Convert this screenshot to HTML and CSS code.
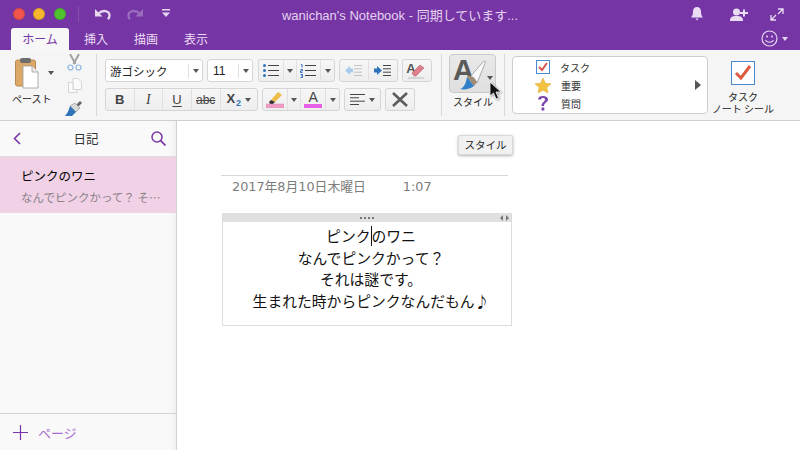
FILE: index.html
```html
<!DOCTYPE html>
<html lang="ja">
<head>
<meta charset="utf-8">
<title>OneNote</title>
<link rel="stylesheet" href="styles.css">
</head>
<body>
<div class="app">
  <header class="titlebar">
    <div class="toprow">
      <div class="top-left">
        <span class="light red"></span><span class="light yellow"></span><span class="light green"></span>
        <span class="top-sep"></span>
        <svg class="undo" width="16" height="12" viewBox="0 0 16 12"><path d="M0 1v7.500h7.500z" fill="#e6d7f0"/><path d="M3.500 5.500C7.500 1.500 14.500 2.500 14.500 7.500c0 1.500-.5 2.500-1.500 3.700" fill="none" stroke="#e6d7f0" stroke-width="2.300"/></svg>
        <svg class="redo" width="16" height="12" viewBox="0 0 16 12"><path d="M16 1v7.500H8.500z" fill="#9a6cbd"/><path d="M12.500 5.500C8.500 1.500 1.500 2.500 1.500 7.500c0 1.500.5 2.500 1.500 3.700" fill="none" stroke="#9a6cbd" stroke-width="2.300"/></svg>
        <svg class="qat" width="10" height="10" viewBox="0 0 10 10"><path d="M1 0h8v1.500H1zM1 3.500h8L5 8z" fill="#e6d7f0"/></svg>
      </div>
      <div class="doc-title">wanichan's Notebook - 同期しています...</div>
      <div class="top-right">
        <svg width="12" height="14" viewBox="0 0 12 14"><path d="M6 0c2.500 0 4 2 4 4.500 0 3 .5 4.500 2 6H0c1.500-1.500 2-3 2-6C2 2 3.500 0 6 0zM4.500 11.500h3L6 13.500z" fill="#eadcf3"/></svg>
        <svg class="add-user" width="18" height="13" viewBox="0 0 18 13"><circle cx="6.500" cy="4" r="3.500" fill="#eadcf3"/><path d="M0 13c0-4 2-5 6.500-5s6.500 1 6.500 5z" fill="#eadcf3"/><path d="M13 1.500h2v2.500h3v2h-3v2.500h-2V6h-3V4h3z" fill="#eadcf3"/></svg>
        <svg class="expand" width="14" height="13" viewBox="0 0 14 13"><path d="M8 1h5v5M13 1L8 6M6 12H1V7M1 12l5-5" fill="none" stroke="#eadcf3" stroke-width="1.300"/></svg>
      </div>
    </div>
    <nav class="tabrow">
      <span class="tab active">ホーム</span>
      <span class="tab">挿入</span>
      <span class="tab">描画</span>
      <span class="tab">表示</span>
      <span class="smile">
        <svg width="17" height="17" viewBox="0 0 17 17"><circle cx="8.500" cy="8.500" r="7.500" fill="none" stroke="#e6d7f0" stroke-width="1.200"/><circle cx="6" cy="6.500" r="1" fill="#e6d7f0"/><circle cx="11" cy="6.500" r="1" fill="#e6d7f0"/><path d="M4.500 10c1.500 3 6.500 3 8 0" fill="none" stroke="#e6d7f0" stroke-width="1.100"/></svg>
        <i class="caret light-caret"></i>
      </span>
    </nav>
  </header>

  <section class="ribbon">
    <div class="paste-group">
      <div class="paste">
        <div class="paste-top">
          <svg width="24" height="32" viewBox="0 0 24 32"><rect x=".5" y="3" width="20" height="26" rx="2" fill="#dca868" stroke="#b98a4e"/><rect x="5" y="1" width="11" height="5" rx="2" fill="#6d6d6d"/><path d="M8 9h9l6 6v16H8z" fill="#fff" stroke="#9d9d9d" stroke-width=".8"/><path d="M17 9v6h6" fill="#eee" stroke="#9d9d9d" stroke-width=".8"/></svg>
          <i class="caret paste-caret"></i>
        </div>
        <span class="rlabel paste-label">ペースト</span>
      </div>
      <div class="clip-tools">
        <svg width="15" height="17" viewBox="0 0 15 17"><path d="M3 0l5.500 10M12 0L6.500 10" stroke="#a3a3a3" stroke-width="2" fill="none"/><circle cx="3.500" cy="13.500" r="2.500" fill="none" stroke="#8db7e2" stroke-width="1.200"/><circle cx="11.500" cy="13.500" r="2.500" fill="none" stroke="#8db7e2" stroke-width="1.200"/></svg>
        <svg width="14" height="15" viewBox="0 0 14 15"><path d="M5 .5h5l3.500 3.500v7.500H5z" fill="#fafafa" stroke="#d4d4d4"/><path d="M.5 4.500H5v7h4v3H.5z" fill="#fafafa" stroke="#d4d4d4"/></svg>
        <svg width="17" height="16" viewBox="0 0 17 16"><path d="M11 5l4-4 2 2-4 4z" fill="#666"/><path d="M5 6l5-3 5 5-4 4z" fill="#d9d9d9" stroke="#8a8a8a" stroke-width=".6"/><path d="M5 6l6 6-4 4H0c3-3 4-7 5-10z" fill="#2f74bb"/></svg>
      </div>
    </div>

    <div class="font-group">
      <div class="frow">
        <div class="btn select font-name"><span>游ゴシック</span><i class="cell-caret"><i class="caret"></i></i></div>
        <div class="btn select font-size"><span>11</span><i class="cell-caret"><i class="caret"></i></i></div>
        <div class="btn list-btns">
          <span class="cell c-list">
            <svg width="16" height="13" viewBox="0 0 16 13"><circle cx="1.500" cy="1.500" r="1.500" fill="#2f74bb"/><circle cx="1.500" cy="6.500" r="1.500" fill="#2f74bb"/><circle cx="1.500" cy="11.500" r="1.500" fill="#2f74bb"/><path d="M5 1.500h11M5 6.500h11M5 11.500h11" stroke="#444"/></svg>
          </span><span class="cell c-caret"><i class="caret"></i></span>
          <span class="cell c-list">
            <svg width="16" height="14" viewBox="0 0 16 14"><path d="M1 .5h1v3M.5 5.500h2v1.500h-2v1.500h2M.5 10.500h2v1.300h-1 1v1.700h-2" fill="none" stroke="#2f74bb"/><path d="M5 1.500h11M5 6.500h11M5 11.500h11" stroke="#444"/></svg>
          </span><span class="cell c-caret"><i class="caret"></i></span>
        </div>
        <div class="btn indent-btns">
          <span class="cell c-indent">
            <svg width="17" height="11" viewBox="0 0 17 11"><path d="M0 5.500L5 1v2.500h3v4H5V10z" fill="#a9cbea"/><path d="M9 .5h8M9 3.800h8M9 7.200h8M9 10.500h8" stroke="#c2c2c2"/></svg>
          </span>
          <span class="cell c-indent">
            <svg width="17" height="11" viewBox="0 0 17 11"><path d="M8 5.500L3 1v2.500H0v4h3V10z" fill="#2f74bb"/><path d="M9 .5h8M9 3.800h8M9 7.200h8M9 10.500h8" stroke="#444"/></svg>
          </span>
        </div>
        <div class="btn single eraser">
          <span class="era-a">A</span>
          <svg class="era-rub" width="20" height="17" viewBox="0 0 20 17"><path d="M7 11l8-8 4 3-8 8H9z" fill="#dd7f8d" stroke="#b5616e" stroke-width=".6"/><path d="M3 16h16" stroke="#bbb"/></svg>
        </div>
      </div>
      <div class="frow">
        <div class="btn format-btns">
          <span class="cell fmt bold">B</span>
          <span class="cell fmt italic">I</span>
          <span class="cell fmt under">U</span>
          <span class="cell fmt strike">abc</span>
          <span class="cell fmt sub"><b class="sub-x">X</b><b class="sub-2">2</b><i class="caret sub-caret"></i></span>
        </div>
        <div class="btn color-btns">
          <span class="cell swatch-cell">
            <svg width="18" height="17" viewBox="0 0 18 17"><path d="M5 9l7-8 4 3-7 7z" fill="#f0bd4a"/><path d="M3 11l2-2 4 2-2 2H4z" fill="#333"/><rect y="13" width="18" height="4" fill="#f09cc5" stroke="#d888ad" stroke-width=".5"/></svg>
          </span><span class="cell c-caret"><i class="caret"></i></span>
          <span class="cell swatch-cell font-color">
            <span class="fc-a">A</span><i class="fc-bar"></i>
          </span><span class="cell c-caret"><i class="caret"></i></span>
        </div>
        <div class="btn single align">
          <svg width="15" height="11" viewBox="0 0 15 11"><path d="M0 .5h15M0 3.800h9M0 7.200h15M0 10.500h9" stroke="#444"/></svg>
          <i class="caret"></i>
        </div>
        <div class="btn single clear">
          <svg width="16" height="15" viewBox="0 0 16 15"><path d="M1 1l14 13M15 1L1 14" stroke="#5c5c5c" stroke-width="2.600"/></svg>
        </div>
      </div>
    </div>

    <div class="style-group">
      <div class="style-btn">
        <span class="style-a">A</span>
        <svg class="style-brush" width="26" height="32" viewBox="0 0 26 32"><path d="M10 18L23 3q2-2 2.500 0L17 24z" fill="#fafafa" stroke="#8a8a8a" stroke-width=".7"/><path d="M7 18q5-4 10 5l-3 4z" fill="#a08b74"/><path d="M0 30c4-1 6-6 7-12l7 9c-4 3-9 4-14 3z" fill="#2f7fc9"/></svg>
        <i class="caret style-caret"></i>
      </div>
      <span class="rlabel">スタイル</span>
    </div>

    <div class="gallery">
      <ul class="tag-list">
        <li>
          <svg width="14" height="14" viewBox="0 0 14 14"><rect x=".5" y=".5" width="13" height="13" fill="#fff" stroke="#4a8bd0"/><path d="M3 7l3 3 5-7" fill="none" stroke="#d9534a" stroke-width="2"/></svg>
          <span>タスク</span>
        </li>
        <li>
          <svg width="16" height="15" viewBox="0 0 16 15"><path d="M8 0l2.400 5.200 5.600.6-4.200 3.700 1.200 5.500L8 12.200 3 15l1.200-5.500L0 5.800l5.600-.6z" fill="#f3c23f" stroke="#d9a52c" stroke-width=".5"/></svg>
          <span>重要</span>
        </li>
        <li>
          <svg width="12" height="16" viewBox="0 0 12 16"><path d="M1 4.500C1 2 3 1 6 1s5 1.500 5 3.500c0 3-4 3-4 6.500H4.500c0-4 3.500-4 3.500-6.500 0-1-1-1.500-2-1.500s-2 .5-2.200 1.500z" fill="#7c45ad"/><rect x="4.500" y="12.500" width="2.800" height="3" fill="#7c45ad"/></svg>
          <span>質問</span>
        </li>
      </ul>
      <i class="gallery-arrow"></i>
    </div>

    <div class="task-group">
      <svg width="24" height="24" viewBox="0 0 24 24"><rect x=".5" y=".5" width="23" height="23" fill="#fff" stroke="#4a8bd0"/><path d="M5 12l5 5 9-12" fill="none" stroke="#dc5a3e" stroke-width="3"/></svg>
      <span class="rlabel task-label">タスク<br>ノート シール</span>
    </div>
  </section>

  <main class="workspace">
    <aside class="sidebar">
      <div class="side-head">
        <svg width="8" height="13" viewBox="0 0 8 13"><path d="M7 1L1.500 6.500 7 12" fill="none" stroke="#7a35a8" stroke-width="1.600"/></svg>
        <span>日記</span>
        <svg width="15" height="15" viewBox="0 0 15 15"><circle cx="6" cy="6" r="5" fill="none" stroke="#7a35a8" stroke-width="1.500"/><path d="M9.700 9.700L14.500 14.500" stroke="#7a35a8" stroke-width="1.700"/></svg>
      </div>
      <div class="page-item">
        <div class="page-title">ピンクのワニ</div>
        <div class="page-sub">なんでピンクかって？ そ…</div>
      </div>
      <div class="side-foot">
        <svg width="15" height="15" viewBox="0 0 15 15"><path d="M7.500 0v15M0 7.500h15" stroke="#7a35a8" stroke-width="1.200"/></svg>
        <span>ページ</span>
      </div>
    </aside>
    <div class="page">
      <div class="page-meta">
        <span class="meta-date">2017年8月10日木曜日</span>
        <span class="meta-time">1:07</span>
      </div>
      <div class="note">
        <div class="note-handle">
          <span class="dots"></span>
          <span class="arrows"><i class="ar-left"></i><i class="ar-right"></i></span>
        </div>
        <div class="note-body">
          <p>ピンク<span class="caret-bar"></span>のワニ</p>
          <p>なんでピンクかって？</p>
          <p>それは謎です。</p>
          <p>生まれた時からピンクなんだもん♪</p>
        </div>
      </div>
    </div>
  </main>

  <div class="tooltip">スタイル</div>
  <svg class="cursor" width="13" height="20" viewBox="0 0 13 20"><path d="M1 1v14l3.500-3 2.500 6 2.500-1-2.500-6H12z" fill="#111" stroke="#fff" stroke-width=".8"/></svg>
</div>
</body>
</html>
```
FILE: styles.css
```css
* { box-sizing: border-box; }
html, body { margin: 0; padding: 0; }
body {
  width: 800px;
  height: 450px;
  overflow: hidden;
  font-family: "Noto Sans CJK JP", "Liberation Sans", sans-serif;
  background: #fff;
}
i { display: block; font-style: normal; }
svg { display: block; flex: none; }

.app {
  position: relative;
  width: 800px;
  height: 450px;
  display: flex;
  flex-direction: column;
}

/* title bar */
.titlebar { height: 50px; background: #7635a5; flex: none; }
.toprow {
  height: 28px;
  display: grid;
  grid-template-columns: 1fr auto 1fr;
  align-items: center;
}
.top-left { display: flex; align-items: center; padding-left: 13px; }
.light { width: 12px; height: 12px; border-radius: 50%; margin-right: 8px; border: 1px solid rgba(0,0,0,.12); }
.light.red { background: #f2544e; }
.light.yellow { background: #f6b62d; }
.light.green { background: #4fc42e; margin-left: 1px; }
.top-sep { width: 1px; height: 16px; background: #8550ad; margin-left: 4px; }
.undo { margin-left: 16px; }
.redo { margin-left: 16px; }
.qat { margin-left: 18px; }
.doc-title {
  font-family: "Liberation Sans", "Noto Sans CJK JP", sans-serif;
  font-size: 13px;
  color: #e4d3ef;
  white-space: nowrap;
}
.top-right { display: flex; align-items: center; justify-content: flex-end; padding-right: 16px; }
.add-user { margin-left: 27px; }
.expand { margin-left: 22px; }

.tabrow { height: 22px; display: flex; align-items: stretch; padding-left: 11px; padding-right: 12px; }
.tab {
  font-size: 12px;
  line-height: 22px;
  color: #eadcf3;
  padding: 0 13px;
}
.tab.active {
  width: 58px;
  padding: 0;
  margin-right: 2px;
  text-align: center;
  background: #f7f7f7;
  color: #7635a5;
  border-radius: 3px 3px 0 0;
}
.smile { margin-left: auto; margin-top: -1px; display: flex; align-items: center; gap: 4px; }

.caret {
  width: 0;
  height: 0;
  border-left: 3.500px solid transparent;
  border-right: 3.500px solid transparent;
  border-top: 4px solid #555;
}
.light-caret { border-top-color: #e6d7f0; }

/* ribbon */
.ribbon {
  height: 71px;
  flex: none;
  display: flex;
  background: #f5f5f5;
  border-bottom: 1px solid #cfcfcf;
}
.rlabel { font-size: 10px; line-height: 13px; color: #222; text-align: center; white-space: nowrap; }

.paste-group {
  width: 97px;
  height: 62px;
  margin-top: 4px;
  display: flex;
  border-right: 1px solid #d9d9d9;
}
.paste { width: 55px; display: flex; flex-direction: column; padding-left: 12px; }
.paste-top { display: flex; padding-left: 3px; height: 38px; padding-top: 3px; }
.paste-caret { margin: 14px 0 0 9px; }
.paste-label { text-align: left; }
.clip-tools { display: flex; flex-direction: column; align-items: center; justify-content: space-between; padding-left: 5px; width: 34px; }
.clip-tools svg:last-child { margin-left: -2px; }

.font-group {
  width: 336px;
  height: 62px;
  margin: 4px 0 0 8px;
  padding-top: 5px;
  display: flex;
  flex-direction: column;
  gap: 6px;
}
.frow { display: flex; height: 23px; gap: 4px; }
.btn {
  height: 23px;
  display: flex;
  align-items: stretch;
  background: linear-gradient(#f6f6f6, #eeeeee);
  border: 1px solid #d5d5d5;
  border-radius: 3px;
  color: #333;
}
.cell { display: flex; align-items: center; justify-content: center; border-right: 1px solid #e0e0e0; }
.cell:last-child { border-right: 0; }
.select { background: #fff; align-items: center; justify-content: space-between; font-size: 11.500px; color: #222; }
.select > span { padding-left: 4px; }
.cell-caret { width: 14px; height: 14px; border-left: 1px solid #e0e0e0; display: flex; align-items: center; justify-content: center; }
.font-name { width: 98px; }
.font-size { width: 46px; font-family: "Liberation Sans", sans-serif; font-size: 12px; }
.font-size > span { padding-left: 5px; }
.list-btns { width: 77px; margin-left: 1px; }
.c-list { width: 25px; }
.c-caret { width: 13px; }
.indent-btns { width: 59px; }
.c-indent { width: 29px; }
.single { align-items: center; justify-content: center; }
.eraser { width: 30px; }
.era-a { font-family: "Liberation Sans", sans-serif; font-size: 13px; line-height: 14px; font-weight: 700; color: #555; margin: -3px -17px 0 -3px; }
.era-rub { margin-left: 6px; }

.format-btns { width: 153px; }
.fmt { width: 29px; font-family: "Liberation Sans", sans-serif; font-size: 13px; color: #444; }
.bold { font-weight: 700; }
.italic { font-style: italic; font-family: "Liberation Serif", serif; font-size: 14px; }
.under { text-decoration: underline; text-underline-offset: 2px; }
.strike { text-decoration: line-through; font-size: 12px; }
.sub { width: 37px; }
.sub-x { font-size: 13px; margin-top: -3px; }
.sub-2 { font-size: 9px; color: #2f74bb; margin: 7px 4px 0 1px; }
.sub-caret { margin-top: 0; }
.color-btns { width: 78px; }
.swatch-cell { width: 26px; }
.font-color { flex-direction: column; justify-content: flex-start; padding-top: 2px; }
.fc-a { font-family: "Liberation Sans", sans-serif; font-size: 14px; line-height: 13px; color: #444; }
.fc-bar { width: 18px; height: 4px; margin-top: 0; background: #e75ee7; }
.align { width: 37px; gap: 4px; }
.clear { width: 30px; }

.style-group {
  width: 64px;
  height: 62px;
  margin: 4px 0 0 0;
  display: flex;
  flex-direction: column;
  align-items: flex-start;
  border-left: 1px solid #d9d9d9;
  border-right: 1px solid #d9d9d9;
}
.style-group .rlabel { margin: 2px 0 0 11px; }
.style-btn {
  width: 47px;
  height: 39px;
  margin-left: 7px;
  display: flex;
  align-items: center;
  padding-left: 3px;
  background: linear-gradient(#e9e9e9, #dfdfdf);
  border: 1px solid #c9c9c9;
  border-radius: 4px;
}
.style-a {
  font-family: "Liberation Sans", sans-serif;
  font-size: 29px;
  line-height: 30px;
  font-weight: 700;
  color: #5a5a5a;
  margin-top: -7px;
}
.style-brush { margin-left: -14px; margin-top: 2px; }
.style-caret { margin: 8px 0 0 1px; }

.gallery {
  width: 196px;
  height: 58px;
  margin: 6px 0 0 7px;
  background: #fff;
  border: 1px solid #cdcdcd;
  border-radius: 4px;
  display: flex;
  align-items: center;
  justify-content: space-between;
  padding-right: 6px;
}
.tag-list { list-style: none; margin: 0; padding: 0 0 0 20px; display: flex; flex-direction: column; }
.tag-list li { height: 18px; display: flex; align-items: center; font-size: 10px; color: #333; }
.tag-list li:nth-child(1) svg { margin: 0 10px 0 3px; }
.tag-list li:nth-child(2) svg { margin: 0 10px 0 2px; }
.tag-list li:nth-child(3) svg { margin: 0 12px 0 4px; }
.gallery-arrow {
  width: 0;
  height: 0;
  border-top: 5px solid transparent;
  border-bottom: 5px solid transparent;
  border-left: 6px solid #555;
}
.task-group { width: 70px; margin-left: 0; padding-top: 11px; display: flex; flex-direction: column; align-items: center; }
.task-label { margin-top: 6px; line-height: 12px; font-size: 10px; }

/* workspace */
.workspace { flex: 1; display: flex; min-height: 0; }
.sidebar {
  width: 177px;
  flex: none;
  display: flex;
  flex-direction: column;
  background: #f9f9f9;
  border-right: 1px solid #d2d2d2;
  box-shadow: inset -8px 0 8px -8px rgba(0,0,0,.08);
}
.side-head {
  height: 36px;
  flex: none;
  display: flex;
  align-items: center;
  justify-content: space-between;
  padding: 0 10px 0 13px;
  border-bottom: 1px solid #dcdcdc;
  font-size: 12.500px;
  color: #333;
}
.page-item { height: 56px; flex: none; background: #f0d1e5; padding: 9px 0 0 21px; }
.page-title { font-size: 12.500px; line-height: 19px; color: #000; }
.page-sub { font-size: 11.500px; line-height: 18px; margin-top: 3px; color: #8b8389; white-space: nowrap; }
.side-foot {
  margin-top: auto;
  height: 37px;
  display: flex;
  align-items: center;
  padding-left: 13px;
  gap: 10px;
  border-top: 1px solid #d2d2d2;
  font-size: 13px;
  color: #a86dd0;
}

.page { flex: 1; padding: 54px 0 0 44px; background: #fff; }
.page-meta {
  width: 287px;
  height: 38px;
  padding: 1px 0 0 11px;
  border-top: 1px solid #d8d8d8;
  display: flex;
  font-family: "DejaVu Sans", "Noto Sans CJK JP", sans-serif;
  font-size: 12.800px;
  line-height: 19px;
  color: #7c7c7c;
}
.meta-time { margin-left: 37px; }
.note { width: 290px; height: 113px; margin-left: 1px; border: 1px solid #dcdcdc; border-top: 0; }
.note-handle {
  height: 9px;
  background: #e0e0e0;
  display: flex;
  align-items: center;
  justify-content: center;
  position: relative;
}
.dots { width: 14px; height: 2px; background: repeating-linear-gradient(90deg, #777 0 2px, transparent 2px 4px); }
.arrows { position: absolute; right: 2px; top: 2px; display: flex; gap: 3px; }
.ar-left { border-top: 3px solid transparent; border-bottom: 3px solid transparent; border-right: 3px solid #777; }
.ar-right { border-top: 3px solid transparent; border-bottom: 3px solid transparent; border-left: 3px solid #777; }
.note-body { padding: 3px 0 0 8px; text-align: center; font-size: 14.800px; line-height: 21.600px; color: #111; }
.note-body p { margin: 0; white-space: nowrap; }
.caret-bar { display: inline-block; width: 1px; height: 20px; background: #111; vertical-align: -4px; }

/* overlays */
.tooltip {
  position: absolute;
  left: 458px;
  top: 135px;
  width: 55px;
  height: 20px;
  background: #f1f1f1;
  border: 1px solid #d8d8d8;
  border-radius: 2px;
  box-shadow: 0 1px 3px rgba(0,0,0,.3);
  font-size: 10.500px;
  line-height: 18px;
  text-align: center;
  color: #222;
}
.cursor { position: absolute; left: 489px; top: 81px; filter: drop-shadow(1px 1px 1px rgba(0,0,0,.35)); }
```
